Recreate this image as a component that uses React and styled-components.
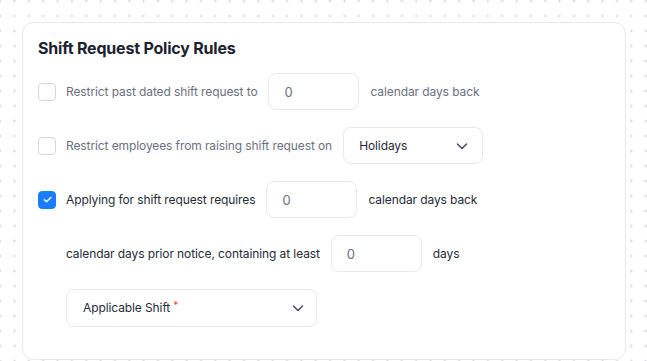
import React from "react";
import styled, { createGlobalStyle } from "styled-components";

const GlobalStyle = createGlobalStyle`
  * { box-sizing: border-box; }
  html, body {
    margin: 0;
    padding: 0;
    background: #ffffff;
    font-family: Inter, "Noto Sans", "Liberation Sans", sans-serif;
  }
`;

const Page = styled.div`
  width: 647px;
  height: 361px;
  overflow: hidden;
  padding: 22px 21px 0 22px;
  background-color: #ffffff;
  background-image: radial-gradient(circle, #d9dbe1 1px, transparent 1.3px);
  background-size: 14.35px 15px;
  background-position: -7px -6.5px;
`;

const Card = styled.section`
  width: 604px;
  height: 338px;
  background: #ffffff;
  border: 1px solid #e6e8f0;
  border-radius: 12px;
  padding: 15px 15px 0 15px;
`;

const Title = styled.h2`
  margin: 0 0 15px;
  font-size: 16px;
  line-height: 20px;
  font-weight: 700;
  color: #1c2230;
  letter-spacing: -0.2px;
`;

const Rules = styled.div`
  display: flex;
  flex-direction: column;
  gap: 17px;
`;

const Row = styled.div`
  display: flex;
  align-items: center;
  gap: 11px;
  height: 37px;
  padding-left: ${(p) => (p.$indent ? "28px" : "0")};
`;

const Check = styled.span`
  width: 18px;
  height: 18px;
  flex: none;
  margin-right: -1px;
  border-radius: 4px;
  display: flex;
  align-items: center;
  justify-content: center;
  border: 1px solid ${(p) => (p.$on ? "#1a7cff" : "#d4d7de")};
  background: ${(p) => (p.$on ? "#1a7cff" : "#ffffff")};
`;

const Label = styled.span`
  font-size: 12px;
  letter-spacing: -0.1px;
  color: ${(p) => (p.$muted ? "#6b7080" : "#262b38")};
  white-space: nowrap;
`;

const NumberBox = styled.div`
  width: 91px;
  height: 37px;
  border: 1px solid #e6e8ee;
  border-radius: 8px;
  display: flex;
  align-items: center;
  padding-left: 15px;
  font-size: 13px;
  color: #6b7080;
`;

const Select = styled.div`
  width: ${(p) => p.$w}px;
  height: ${(p) => p.$h || 37}px;
  border: 1px solid #e6e8ee;
  border-radius: 8px;
  display: flex;
  align-items: center;
  justify-content: space-between;
  padding: 0 ${(p) => p.$pr || 14}px 0 ${(p) => p.$pl || 15}px;
  font-size: 12px;
  letter-spacing: -0.1px;
  color: #262b38;
`;

const Required = styled.span`
  color: #ef4b4b;
  font-size: 10px;
  margin-left: 3px;
  position: relative;
  top: -3px;
`;

const Chevron = () => (
  <svg width="12" height="12" viewBox="0 0 12 12" fill="none">
    <path d="M1.5 4l4.5 4.5L10.5 4" stroke="#4b5060" strokeWidth="1.6" strokeLinecap="round" strokeLinejoin="round" />
  </svg>
);

const Tick = () => (
  <svg width="11" height="11" viewBox="0 0 12 12" fill="none">
    <path d="M2.5 6.2l2.4 2.3L9.6 3.8" stroke="#fff" strokeWidth="1.6" strokeLinecap="round" strokeLinejoin="round" />
  </svg>
);

export default function App() {
  return (
    <Page>
      <GlobalStyle />
      <Card>
        <Title>Shift Request Policy Rules</Title>
        <Rules>
          <Row>
            <Check />
            <Label $muted>Restrict past dated shift request to</Label>
            <NumberBox>0</NumberBox>
            <Label $muted>calendar days back</Label>
          </Row>
          <Row>
            <Check />
            <Label $muted>Restrict employees from raising shift request on</Label>
            <Select $w={140}>
              Holidays
              <Chevron />
            </Select>
          </Row>
          <Row>
            <Check $on>
              <Tick />
            </Check>
            <Label>Applying for shift request requires</Label>
            <NumberBox>0</NumberBox>
            <Label>calendar days back</Label>
          </Row>
          <Row $indent>
            <Label>calendar days prior notice, containing at least</Label>
            <NumberBox>0</NumberBox>
            <Label>days</Label>
          </Row>
          <Row $indent>
            <Select $w={251} $h={38} $pl={16} $pr={12}>
              <span>
                Applicable Shift<Required>*</Required>
              </span>
              <Chevron />
            </Select>
          </Row>
        </Rules>
      </Card>
    </Page>
  );
}
